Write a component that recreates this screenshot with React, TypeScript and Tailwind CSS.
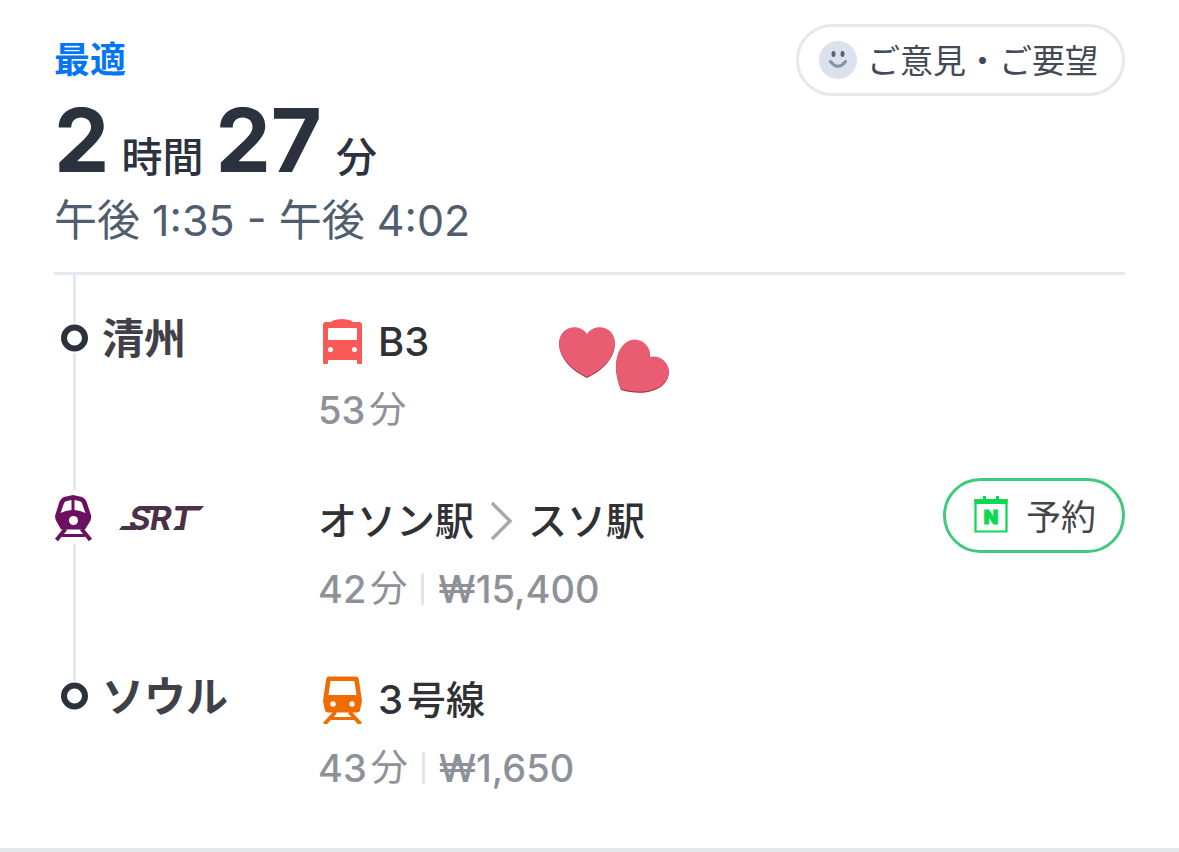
import React from 'react';

const StopMarker: React.FC = () => (
  <svg width="30" height="30" viewBox="0 0 30 30" aria-hidden="true">
    <circle cx="15.500" cy="15" r="10.500" fill="#fff" stroke="#2b323d" strokeWidth="6" />
  </svg>
);

const SrtTrainIcon: React.FC = () => (
  <svg width="40" height="54" viewBox="0 0 40 54" aria-hidden="true">
    <path
      d="M19 5 L28 7 Q31 8 32.500 11.500 L37 25 Q37.800 28 36 31.500 L31 39.500 H7 L2.500 31.500 Q0.500 28 1.300 25 L5.500 11.500 Q7 8 10 7 Z"
      fill="#6b1160"
    />
    <path d="M17.500 10 L12 11.300 Q10.500 11.700 10 13.300 L6.500 23 Q11.500 20.500 17.500 20 Z" fill="#fff" />
    <path d="M20.500 10 L26 11.300 Q27.500 11.700 28 13.300 L31.500 23 Q26.500 20.500 20.500 20 Z" fill="#fff" />
    <circle cx="19.500" cy="30.500" r="4.500" fill="#fff" />
    <path d="M11.500 39 L2.500 50 M27.500 39 L36.500 50" stroke="#6b1160" strokeWidth="4" />
    <path d="M8 45.500 H31" stroke="#6b1160" strokeWidth="3" />
  </svg>
);

const BusIcon: React.FC = () => (
  <svg className="shrink-0" width="48" height="48" viewBox="0 0 48 48" aria-hidden="true">
    <path
      fillRule="evenodd"
      fill="#fa5a55"
      d="M15 2.500 Q24 -0.500 33 2.500 L35 4 H41 Q44 4 44 7 V45 Q44 46 43 46 H40 Q39 46 39 45 V42 H10 V45 Q10 46 9 46 H6 Q5 46 5 45 V7 Q5 4 8 4 H13 Z M10 10 V22 H39 V10 Z M12.500 31.500 m-2.500 0 a2.500 2.500 0 1 0 5 0 a2.500 2.500 0 1 0 -5 0 Z M36.500 31.500 m-2.500 0 a2.500 2.500 0 1 0 5 0 a2.500 2.500 0 1 0 -5 0 Z"
    />
  </svg>
);

const MetroIcon: React.FC = () => (
  <svg className="shrink-0" width="48" height="48" viewBox="0 0 48 48" aria-hidden="true">
    <path
      fillRule="evenodd"
      fill="#ef6c00"
      d="M11 0.500 H38 Q40.500 0.500 40.800 3 L44 25 L42 34.500 Q41.500 36.500 39 36.500 H10 Q7.500 36.500 7 34.500 L5 25 L8.200 3 Q8.500 0.500 11 0.500 Z M12.500 5 L10.500 19 H38.500 L36.500 5 Z M15 28 m-2.700 0 a2.700 2.700 0 1 0 5.400 0 a2.700 2.700 0 1 0 -5.400 0 Z M34 28 m-2.700 0 a2.700 2.700 0 1 0 5.400 0 a2.700 2.700 0 1 0 -5.400 0 Z"
    />
    <path d="M17.500 36 L6.500 48 M31.500 36 L42.500 48" stroke="#ef6c00" strokeWidth="4" />
    <path d="M12 42.500 H37" stroke="#ef6c00" strokeWidth="3" />
  </svg>
);

const Hearts: React.FC = () => (
  <svg className="mt-[50px] shrink-0" width="114" height="70" viewBox="0 0 114 70" aria-hidden="true">
    <defs>
      <path id="heart" d="M28 8 C33 0 44 -1 51 5 C58 12 57 23 51 32 C46 40 38 46 28 51 C18 46 10 40 5 32 C-1 23 -2 12 5 5 C12 -1 23 0 28 8 Z" />
    </defs>
    <use href="#heart" x="1" y="2" fill="#a32647" />
    <use href="#heart" x="1" y="1" fill="#e85d72" />
    <use href="#heart" fill="#a32647" transform="translate(63 65) rotate(42) translate(-28 -51)" />
    <use href="#heart" fill="#e85d72" transform="translate(63 64) rotate(42) translate(-28 -51)" />
  </svg>
);

const SrtLogo: React.FC = () => (
  <svg width="88" height="48" viewBox="0 0 88 48" role="img" aria-label="SRT">
    <text x="11 32 54" y="36" fontFamily="Inter, sans-serif" fontSize="33" fontWeight="700" fontStyle="italic" fill="#4b3048">
      SRT
    </text>
    {/* Swashes that lead into the S and out of the T */}
    <path d="M1 36 L4 32 H18 V36 Z" fill="#4b3048" />
    <path d="M21 12 H44 L42 16 H18 Z" fill="#4b3048" />
    <path d="M58 12 H86 L82 16.500 H58 Z" fill="#4b3048" />
    <path d="M55 36 L58 32 H66 V36 Z" fill="#4b3048" />
  </svg>
);

const CalendarIcon: React.FC = () => (
  <svg width="34" height="40" viewBox="0 0 34 40" aria-hidden="true">
    <path d="M1.500 4 H32.500 V35.500 H1.500 Z" fill="none" stroke="#0fd850" strokeWidth="2.200" />
    <path d="M0.500 3 H9 V0 H12 V3 H22 V0 H25 V3 H33.500 V8 H0.500 Z" fill="#0fd850" />
    <text
      x="17"
      y="27.500"
      textAnchor="middle"
      fontFamily="Inter, sans-serif"
      fontSize="19"
      fontWeight="900"
      fill="#0fd850"
      stroke="#0fd850"
      strokeWidth="1"
    >
      N
    </text>
  </svg>
);

interface StepProps {
  marker: React.ReactNode;
  label: React.ReactNode;
  title: React.ReactNode;
  minutes: number;
  price?: string;
  tall?: boolean;
  last?: boolean;
  children?: React.ReactNode;
}

const Step: React.FC<StepProps> = ({ marker, label, title, minutes, price, tall, last, children }) => (
  <li className="flex">
    <div className="flex w-10 shrink-0 flex-col items-center">
      <div className={`w-[3px] bg-[#e4e8ef] ${tall ? 'h-9' : 'h-12'}`} />
      {marker}
      {!last && <div className="w-[3px] flex-1 bg-[#e4e8ef]" />}
    </div>
    <div className="w-56 shrink-0 pt-10 pl-2 text-[42px] leading-[48px] font-bold text-[#404148]">{label}</div>
    <div className="min-w-[240px] pt-[43px] pb-6">
      <div className="flex items-center text-[39px] leading-[48px] font-medium text-[#303134]">{title}</div>
      <div className="mt-6 flex items-center text-[38px] leading-10 font-medium text-[#8f9198]">
        {minutes}
        <span className="ml-1 text-[37px] font-normal">分</span>
        {price && (
          <>
            <span className="mx-[14px] h-8 w-[3px] bg-[#e4e5ec]" />
            {price}
          </>
        )}
      </div>
    </div>
    {children}
  </li>
);

const App: React.FC = () => {
  return (
    <main className="border-b-4 border-[#e6e8ec] bg-white pb-9 font-['Inter','Noto_Sans_CJK_JP',sans-serif]" lang="ja">
      <div className="px-[54px] pt-6">
        {/* Summary */}
        <header className="flex items-start justify-between border-b-[3px] border-[#e4e8ef] pb-7">
          <div className="pt-3">
            <p className="text-[36px] leading-[48px] font-bold text-[#0475f4]">最適</p>
            <h1 className="mt-3 flex items-baseline text-[88px] leading-[88px] font-bold text-[#2b323d]">
              2<span className="mx-3 text-[41px] leading-none font-medium">時間</span>
              27<span className="ml-[14px] text-[41px] leading-none font-medium">分</span>
            </h1>
            <p className="mt-3 text-[43px] leading-[48px] text-[#4f5d6e]">午後 1:35 - 午後 4:02</p>
          </div>
          <button className="flex h-[72px] items-center gap-[10px] rounded-full border-[3px] border-[#e4e8ef] pr-6 pl-5 font-['Noto_Sans_CJK_JP',sans-serif] text-[33px] text-[#434a55]">
            <svg width="38" height="38" viewBox="0 0 38 38" aria-hidden="true">
              <circle cx="19" cy="19" r="19" fill="#dbe2ee" />
              <ellipse cx="14.500" cy="13" rx="2" ry="3" fill="#59616e" />
              <ellipse cx="23.500" cy="13" rx="2" ry="3" fill="#59616e" />
              <path d="M11.500 20.500 Q19 30 26.500 20.500" fill="none" stroke="#8791a2" strokeWidth="3" strokeLinecap="round" />
            </svg>
            ご意見・ご要望
          </button>
        </header>

        {/* Route */}
        <ol>
          <Step
            marker={<StopMarker />}
            label="清州"
            title={
              <>
                <BusIcon />
                <span className="ml-3 text-[40px]">B3</span>
              </>
            }
            minutes={53}
          >
            <Hearts />
          </Step>
          <Step
            tall
            marker={<SrtTrainIcon />}
            label={
              <div className="flex h-12 items-center pl-4">
                <SrtLogo />
              </div>
            }
            title={
              <>
                オソン駅
                <svg className="mx-[14px] shrink-0" width="26" height="40" viewBox="0 0 26 40" aria-hidden="true">
                  <path d="M4 2 L22 20 L4 38" fill="none" stroke="#a9a9ac" strokeWidth="3.500" />
                </svg>
                スソ駅
              </>
            }
            minutes={42}
            price="₩15,400"
          >
            <button className="mt-6 ml-auto flex h-[75px] items-center gap-[18px] rounded-full border-[3px] border-[#3fca7c] pr-[26px] pl-7 font-['Noto_Sans_CJK_JP',sans-serif] text-[35px] text-[#444548]">
              <CalendarIcon />
              予約
            </button>
          </Step>
          <Step
            last
            marker={<StopMarker />}
            label="ソウル"
            title={
              <>
                <MetroIcon />
                <span className="ml-3 text-[40px]">3</span>
                <span className="ml-1">号線</span>
              </>
            }
            minutes={43}
            price="₩1,650"
          />
        </ol>
      </div>
    </main>
  );
};

export default App;
